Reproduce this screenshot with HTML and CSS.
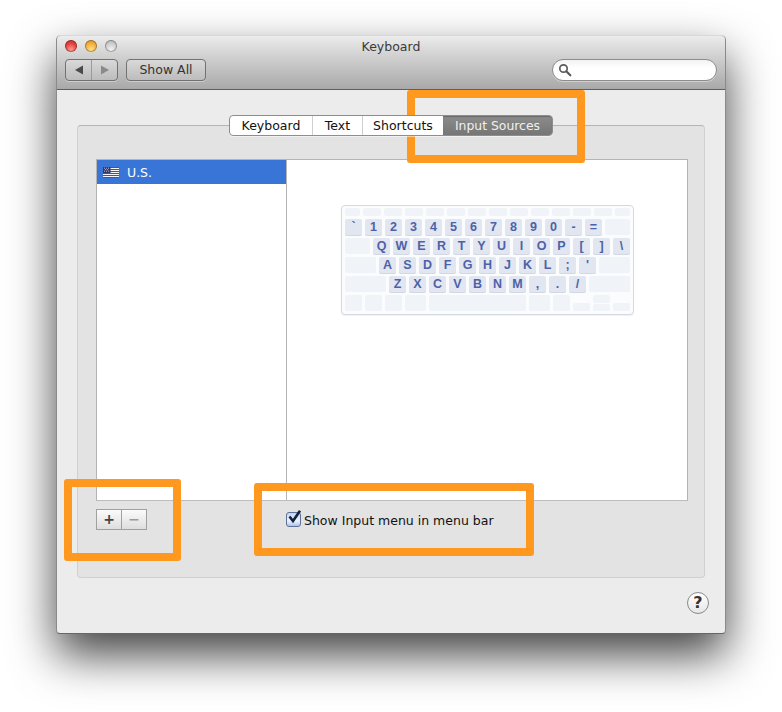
FILE: index.html
```html
<!DOCTYPE html>
<html lang="en">
<head>
<meta charset="utf-8">
<title>Keyboard</title>
<link rel="stylesheet" href="styles.css">
</head>
<body>
<div class="window">
  <header class="toolbar">
    <div class="titlebar">
      <div class="lights">
        <span class="light red"></span>
        <span class="light amber"></span>
        <span class="light off"></span>
      </div>
      <div class="title">Keyboard</div>
    </div>
    <div class="tools">
      <div class="nav">
        <span class="nav-cell first"><svg width="10" height="10" viewBox="0 0 10 10"><path d="M1 5 9 0.5V9.5Z" fill="#4a4a4a"/></svg></span>
        <span class="nav-cell"><svg width="10" height="10" viewBox="0 0 10 10"><path d="M9 5 1 0.5V9.5Z" fill="#8a8a8a"/></svg></span>
      </div>
      <div class="showall">Show All</div>
      <div class="search">
        <svg width="14" height="14" viewBox="0 0 14 14"><circle cx="5.5" cy="5.5" r="3.7" fill="none" stroke="#5a5a5a" stroke-width="1.7"/><path d="M8.3 8.3 12.3 12.3" stroke="#5a5a5a" stroke-width="2.2" stroke-linecap="round"/></svg>
      </div>
    </div>
  </header>
  <main class="content">
    <nav class="tabs">
      <span class="tab t1">Keyboard</span>
      <span class="tab t2">Text</span>
      <span class="tab t3">Shortcuts</span>
      <span class="tab t4 active">Input Sources</span>
    </nav>
    <section class="panel">
      <div class="box">
        <div class="list">
          <div class="row">
            <svg class="flag" width="16" height="11" viewBox="0 0 16 11">
              <rect width="16" height="11" fill="#f4f4f6"/>
              <path d="M0 .5H16M0 2.5H16M0 4.5H16M0 6.5H16M0 8.5H16M0 10.5H16" stroke="#a8323e" stroke-width="1"/>
              <rect width="7.5" height="6" fill="#33376f"/>
              <path d="M1 1.2h.8M3 1.2h.8M5 1.2h.8M2 2.7h.8M4 2.7h.8M1 4.2h.8M3 4.2h.8M5 4.2h.8" stroke="#fff" stroke-width=".8"/>
            </svg>
            <span>U.S.</span>
          </div>
        </div>
        <div class="preview">
          <div class="kbd">
            <div class="kr fn">
              <i class="c w15"></i><i class="c w18"></i><i class="c w18"></i><i class="c w18"></i><i class="c w18"></i><i class="c w18"></i><i class="c w18"></i><i class="c w18"></i><i class="c w18"></i><i class="c w18"></i><i class="c w18"></i><i class="c w18"></i><i class="c w18"></i><i class="c w15"></i>
            </div>
            <div class="kr">
              <b>`</b><b>1</b><b>2</b><b>3</b><b>4</b><b>5</b><b>6</b><b>7</b><b>8</b><b>9</b><b>0</b><b>-</b><b>=</b><i class="c w25"></i>
            </div>
            <div class="kr">
              <i class="c w25"></i><b>Q</b><b>W</b><b>E</b><b>R</b><b>T</b><b>Y</b><b>U</b><b>I</b><b>O</b><b>P</b><b>[</b><b>]</b><b>\</b>
            </div>
            <div class="kr">
              <i class="c w31"></i><b>A</b><b>S</b><b>D</b><b>F</b><b>G</b><b>H</b><b>J</b><b>K</b><b>L</b><b>;</b><b>'</b><i class="c w31"></i>
            </div>
            <div class="kr">
              <i class="c w41"></i><b>Z</b><b>X</b><b>C</b><b>V</b><b>B</b><b>N</b><b>M</b><b>,</b><b>.</b><b>/</b><i class="c w41"></i>
            </div>
            <div class="kr last">
              <i class="c w17"></i><i class="c w17"></i><i class="c w17"></i><i class="c w21"></i><i class="c w97"></i><i class="c w21"></i><i class="c w17"></i>
              <i class="c w17 low"></i>
              <span class="updown"><i class="c half"></i><i class="c half"></i></span>
              <i class="c w17 low"></i>
            </div>
          </div>
        </div>
      </div>
      <div class="controls">
        <div class="plusminus">
          <span class="pm dark">+</span>
          <span class="pm dim">−</span>
        </div>
        <label class="check">
          <span class="checkbox"><svg width="16" height="16" viewBox="0 0 16 16"><path d="M3.5 6.5 7 11 14 0.8" fill="none" stroke="#14213d" stroke-width="2.6"/></svg></span>
          <span class="check-label">Show Input menu in menu bar</span>
        </label>
      </div>
    </section>
    <div class="help-row"><span class="help">?</span></div>
  </main>
</div>
<div class="mark m1"></div>
<div class="mark m2"></div>
<div class="mark m3"></div>
</body>
</html>
```
FILE: styles.css
```css
* { box-sizing: border-box; }
html, body { margin: 0; height: 100%; background: #fff; overflow: hidden; }
body {
  position: relative;
  padding: 35px 0 0 56px;
  font: 12.5px "DejaVu Sans", sans-serif;
  color: #111;
}
.window {
  width: 670px;
  height: 599px;
  border-radius: 5px 5px 4px 4px;
  background: #ececec;
  box-shadow: 0 21px 46px rgba(0,0,0,.74);
  display: flex;
  flex-direction: column;
  border-left: 1px solid #8a8a8a;
  border-right: 1px solid #8a8a8a;
  border-bottom: 1px solid #666;
}
.toolbar {
  height: 55px;
  flex: none;
  background: linear-gradient(#ececec, #d6d6d6 30%, #a9a9a9);
  border-bottom: 1px solid #5f5f5f;
  border-top: 1px solid #d8d8d8;
  border-radius: 5px 5px 0 0;
  padding: 0 8px;
  display: flex;
  flex-direction: column;
}
.titlebar { height: 20px; position: relative; display: flex; align-items: center; }
.lights { display: flex; gap: 8px; position: relative; z-index: 1; }
.light { width: 12px; height: 12px; border-radius: 50%; box-shadow: inset 0 0 0 1px rgba(0,0,0,.28); }
.red { background: radial-gradient(circle at 50% 80%, #ff9a92, #e5403c 55%, #b92a28); }
.amber { background: radial-gradient(circle at 50% 80%, #ffe08a, #f2ae3a 55%, #c9862a); }
.off { background: radial-gradient(circle at 50% 80%, #f2f2f2, #c9c9c9 60%, #a8a8a8); }
.title {
  position: absolute;
  left: 0;
  right: 0;
  top: 3px;
  text-align: center;
  color: #3a3a3a;
  font-size: 12.5px;
}
.tools { display: flex; align-items: center; margin-top: 3px; }
.nav {
  width: 53px;
  height: 22px;
  display: flex;
  border: 1px solid #727272;
  border-radius: 4px;
  background: linear-gradient(#d9d9d9, #bcbcbc);
  box-shadow: 0 1px 0 rgba(255,255,255,.35);
}
.nav-cell { flex: 1; display: flex; align-items: center; justify-content: center; }
.nav-cell.first { border-right: 1px solid #9a9a9a; }
.showall {
  width: 80px;
  height: 22px;
  margin-left: 8px;
  border: 1px solid #727272;
  border-radius: 4px;
  background: linear-gradient(#d9d9d9, #bcbcbc);
  box-shadow: 0 1px 0 rgba(255,255,255,.35);
  text-align: center;
  line-height: 20px;
  color: #333;
}
.search {
  width: 165px;
  height: 22px;
  margin-left: auto;
  border: 1px solid #8c8c8c;
  border-radius: 11px;
  background: linear-gradient(#f2f2f2, #fff 40%);
  box-shadow: 0 1px 0 rgba(255,255,255,.4);
  padding: 3px 0 0 5px;
  display: flex;
}
.content { flex: 1; padding: 25px 20px 0; display: flex; flex-direction: column; }
.tabs {
  display: flex;
  align-self: center;
  height: 21px;
  position: relative;
  z-index: 1;
  margin-bottom: -11px;
  border: 1px solid #8e8e8e;
  border-radius: 4px;
  background: #fff;
  box-shadow: 0 1px 0 rgba(255,255,255,.5);
}
.tab { text-align: center; line-height: 19px; border-right: 1px solid #cfcfcf; }
.t1 { width: 83px; }
.t2 { width: 50px; }
.t3 { width: 80px; border-right: 0; }
.t4 { width: 109px; }
.active {
  background: linear-gradient(#8b8b8b, #767676);
  color: #f0f0f0;
  border-right: 0;
  border-radius: 0 3px 3px 0;
  box-shadow: inset 0 1px 1px rgba(0,0,0,.25);
  font-size: 12.4px;
}
.panel {
  width: 628px;
  height: 453px;
  flex: none;
  background: #e3e3e3;
  border: 1px solid #d0d0d0;
  border-top-color: #b4b4b4;
  border-radius: 4px;
  padding: 33px 16px 0 18px;
}
.box {
  height: 342px;
  display: flex;
  background: #fff;
  border: 1px solid #b4b4b4;
  border-bottom-color: #bdbdbd;
}
.list { width: 190px; flex: none; border-right: 1px solid #b4b4b4; }
.row {
  height: 24px;
  background: #3875d7;
  color: #fff;
  display: flex;
  align-items: center;
  padding-left: 6px;
  gap: 8px;
  font-size: 12.5px;
}
.flag { flex: none; }
.preview { flex: 1; padding: 45px 0 0 54px; }
.kbd {
  width: 293px;
  height: 110px;
  background: #fbfcfe;
  border: 1px solid #d3dae3;
  border-radius: 4px;
  padding: 2px 3px;
  box-shadow: 0 1px 1px rgba(0,0,0,.06);
  display: flex;
  flex-direction: column;
  gap: 3px;
}
.kr { display: flex; gap: 3px; height: 16px; }
.kr.fn { height: 8px; }
.kr b {
  width: 17px;
  height: 16px;
  flex: none;
  background: #e2e6f0;
  border-radius: 2px;
  box-shadow: 0 1px 0 #d2d7e3;
  text-align: center;
  font: bold 12.5px/16px "Liberation Sans", sans-serif;
  color: #4c62a8;
}
.c { display: block; flex: none; height: 100%; background: #f0f3f8; border-radius: 2px; }
.w15 { width: 15px; }
.w17 { width: 17px; }
.w18 { width: 18px; }
.w21 { width: 21px; }
.w25 { width: 25px; }
.w31 { width: 31px; }
.w41 { width: 41px; }
.w97 { width: 97px; }
.low { height: 8px; align-self: flex-end; }
.updown { width: 17px; display: flex; flex-direction: column; gap: 1px; }
.half { height: 8px; flex: 1; }
.controls { display: flex; align-items: center; margin-top: 8px; height: 21px; }
.plusminus {
  width: 51px;
  height: 21px;
  display: flex;
  border: 1px solid #a0a0a0;
  background: linear-gradient(#fbfbfb, #dedede);
}
.pm {
  flex: 1;
  text-align: center;
  font: bold 14px/18px "DejaVu Sans", sans-serif;
}
.dark { color: #444; border-right: 1px solid #a0a0a0; }
.dim { color: #9a9a9a; }
.check { display: flex; align-items: center; gap: 3px; margin-left: 139px; }
.check-label { padding-top: 2px; }
.checkbox {
  width: 15px;
  height: 15px;
  flex: none;
  position: relative;
  border: 1px solid #5f7096;
  border-radius: 3px;
  background: linear-gradient(#c3d4f4, #eef3ff 60%, #a9c4f0);
}
.checkbox svg { position: absolute; left: -1px; top: -3px; }
.help-row { display: flex; justify-content: flex-end; padding-top: 14px; margin-right: -4px; }
.help {
  width: 22px;
  height: 22px;
  border-radius: 50%;
  border: 1px solid #8a8a8a;
  background: linear-gradient(#fff, #e6e6e6);
  text-align: center;
  font: bold 16px/20px "DejaVu Sans", sans-serif;
  color: #333;
}
.mark {
  position: absolute;
  border: 8px solid #fe981e;
  border-radius: 3px;
}
.m1 { left: 407px; top: 90px; width: 178px; height: 73px; }
.m2 { left: 64px; top: 479px; width: 117px; height: 82px; }
.m3 { left: 254px; top: 483px; width: 280px; height: 73px; }
```
